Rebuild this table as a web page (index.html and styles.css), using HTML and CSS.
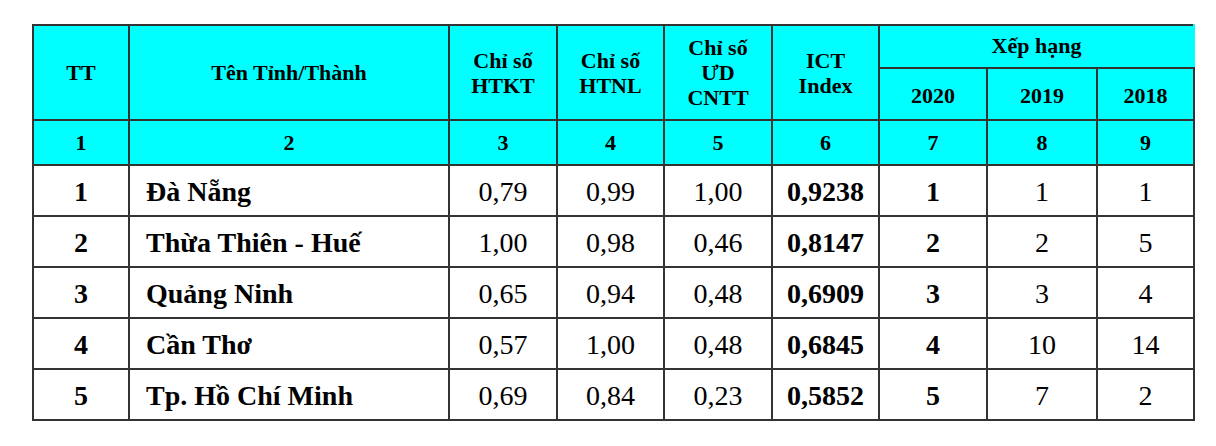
FILE: index.html
```html
<!DOCTYPE html>
<html lang="vi">
<head>
<meta charset="utf-8">
<title>ICT Index</title>
<link rel="stylesheet" href="styles.css">
</head>
<body>
<table class="grid">
  <colgroup>
    <col class="c-tt"><col class="c-name"><col class="c-a"><col class="c-b"><col class="c-a"><col class="c-b"><col class="c-a"><col class="c-y"><col class="c-z">
  </colgroup>
  <thead>
    <tr class="h1">
      <th rowspan="2">TT</th>
      <th rowspan="2">Tên Tỉnh/Thành</th>
      <th rowspan="2">Chỉ số<br>HTKT</th>
      <th rowspan="2">Chỉ số<br>HTNL</th>
      <th rowspan="2">Chỉ số<br>ƯD<br>CNTT</th>
      <th rowspan="2">ICT<br>Index</th>
      <th colspan="3" class="rank">Xếp hạng</th>
    </tr>
    <tr class="h2">
      <th>2020</th><th>2019</th><th>2018</th>
    </tr>
    <tr class="h3">
      <th>1</th><th>2</th><th>3</th><th>4</th><th>5</th><th>6</th><th>7</th><th>8</th><th>9</th>
    </tr>
  </thead>
  <tbody>
    <tr><td class="b">1</td><td class="b name">Đà Nẵng</td><td>0,79</td><td>0,99</td><td>1,00</td><td class="b">0,9238</td><td class="b">1</td><td>1</td><td>1</td></tr>
    <tr><td class="b">2</td><td class="b name">Thừa Thiên - Huế</td><td>1,00</td><td>0,98</td><td>0,46</td><td class="b">0,8147</td><td class="b">2</td><td>2</td><td>5</td></tr>
    <tr><td class="b">3</td><td class="b name">Quảng Ninh</td><td>0,65</td><td>0,94</td><td>0,48</td><td class="b">0,6909</td><td class="b">3</td><td>3</td><td>4</td></tr>
    <tr><td class="b">4</td><td class="b name">Cần Thơ</td><td>0,57</td><td>1,00</td><td>0,48</td><td class="b">0,6845</td><td class="b">4</td><td>10</td><td>14</td></tr>
    <tr class="last"><td class="b">5</td><td class="b name">Tp. Hồ Chí Minh</td><td>0,69</td><td>0,84</td><td>0,23</td><td class="b">0,5852</td><td class="b">5</td><td>7</td><td>2</td></tr>
  </tbody>
</table>
</body>
</html>
```
FILE: styles.css
```css
html, body {
  margin: 0;
  padding: 0;
  background: #ffffff;
}
body {
  padding: 24px 0 0 32px;
  font-family: "Liberation Serif", "DejaVu Serif", serif;
  color: #000;
}
.grid {
  border-collapse: collapse;
  table-layout: fixed;
  width: 1161px;
  font-family: "Liberation Serif", "DejaVu Serif", serif;
}
.c-tt { width: 96px; }
.c-name { width: 320px; }
.c-a { width: 108px; }
.c-b { width: 107px; }
.c-y { width: 110px; }
.c-z { width: 97px; }

.grid th, .grid td {
  border: 2px solid #333;
  padding: 0;
  text-align: center;
  vertical-align: middle;
  font-family: "Liberation Serif", "DejaVu Serif", serif;
}
.grid th {
  background: #00ffff;
  font-weight: bold;
  font-size: 22px;
  line-height: 25px;
}
.grid th.rank {
  border-right-color: #00ffff;
  padding-bottom: 2px;
}
.h1 th { height: 39px; }
.h2 th { height: 48px; padding-top: 2px; }
.h3 th { height: 43px; }

.grid td {
  font-size: 28px;
  height: 47px;
  line-height: 30px;
  padding-top: 2px;
}
.grid tr.last td { height: 47px; }
.grid td.b { font-weight: bold; }
.grid td.name {
  text-align: left;
  padding-left: 16px;
}
```
